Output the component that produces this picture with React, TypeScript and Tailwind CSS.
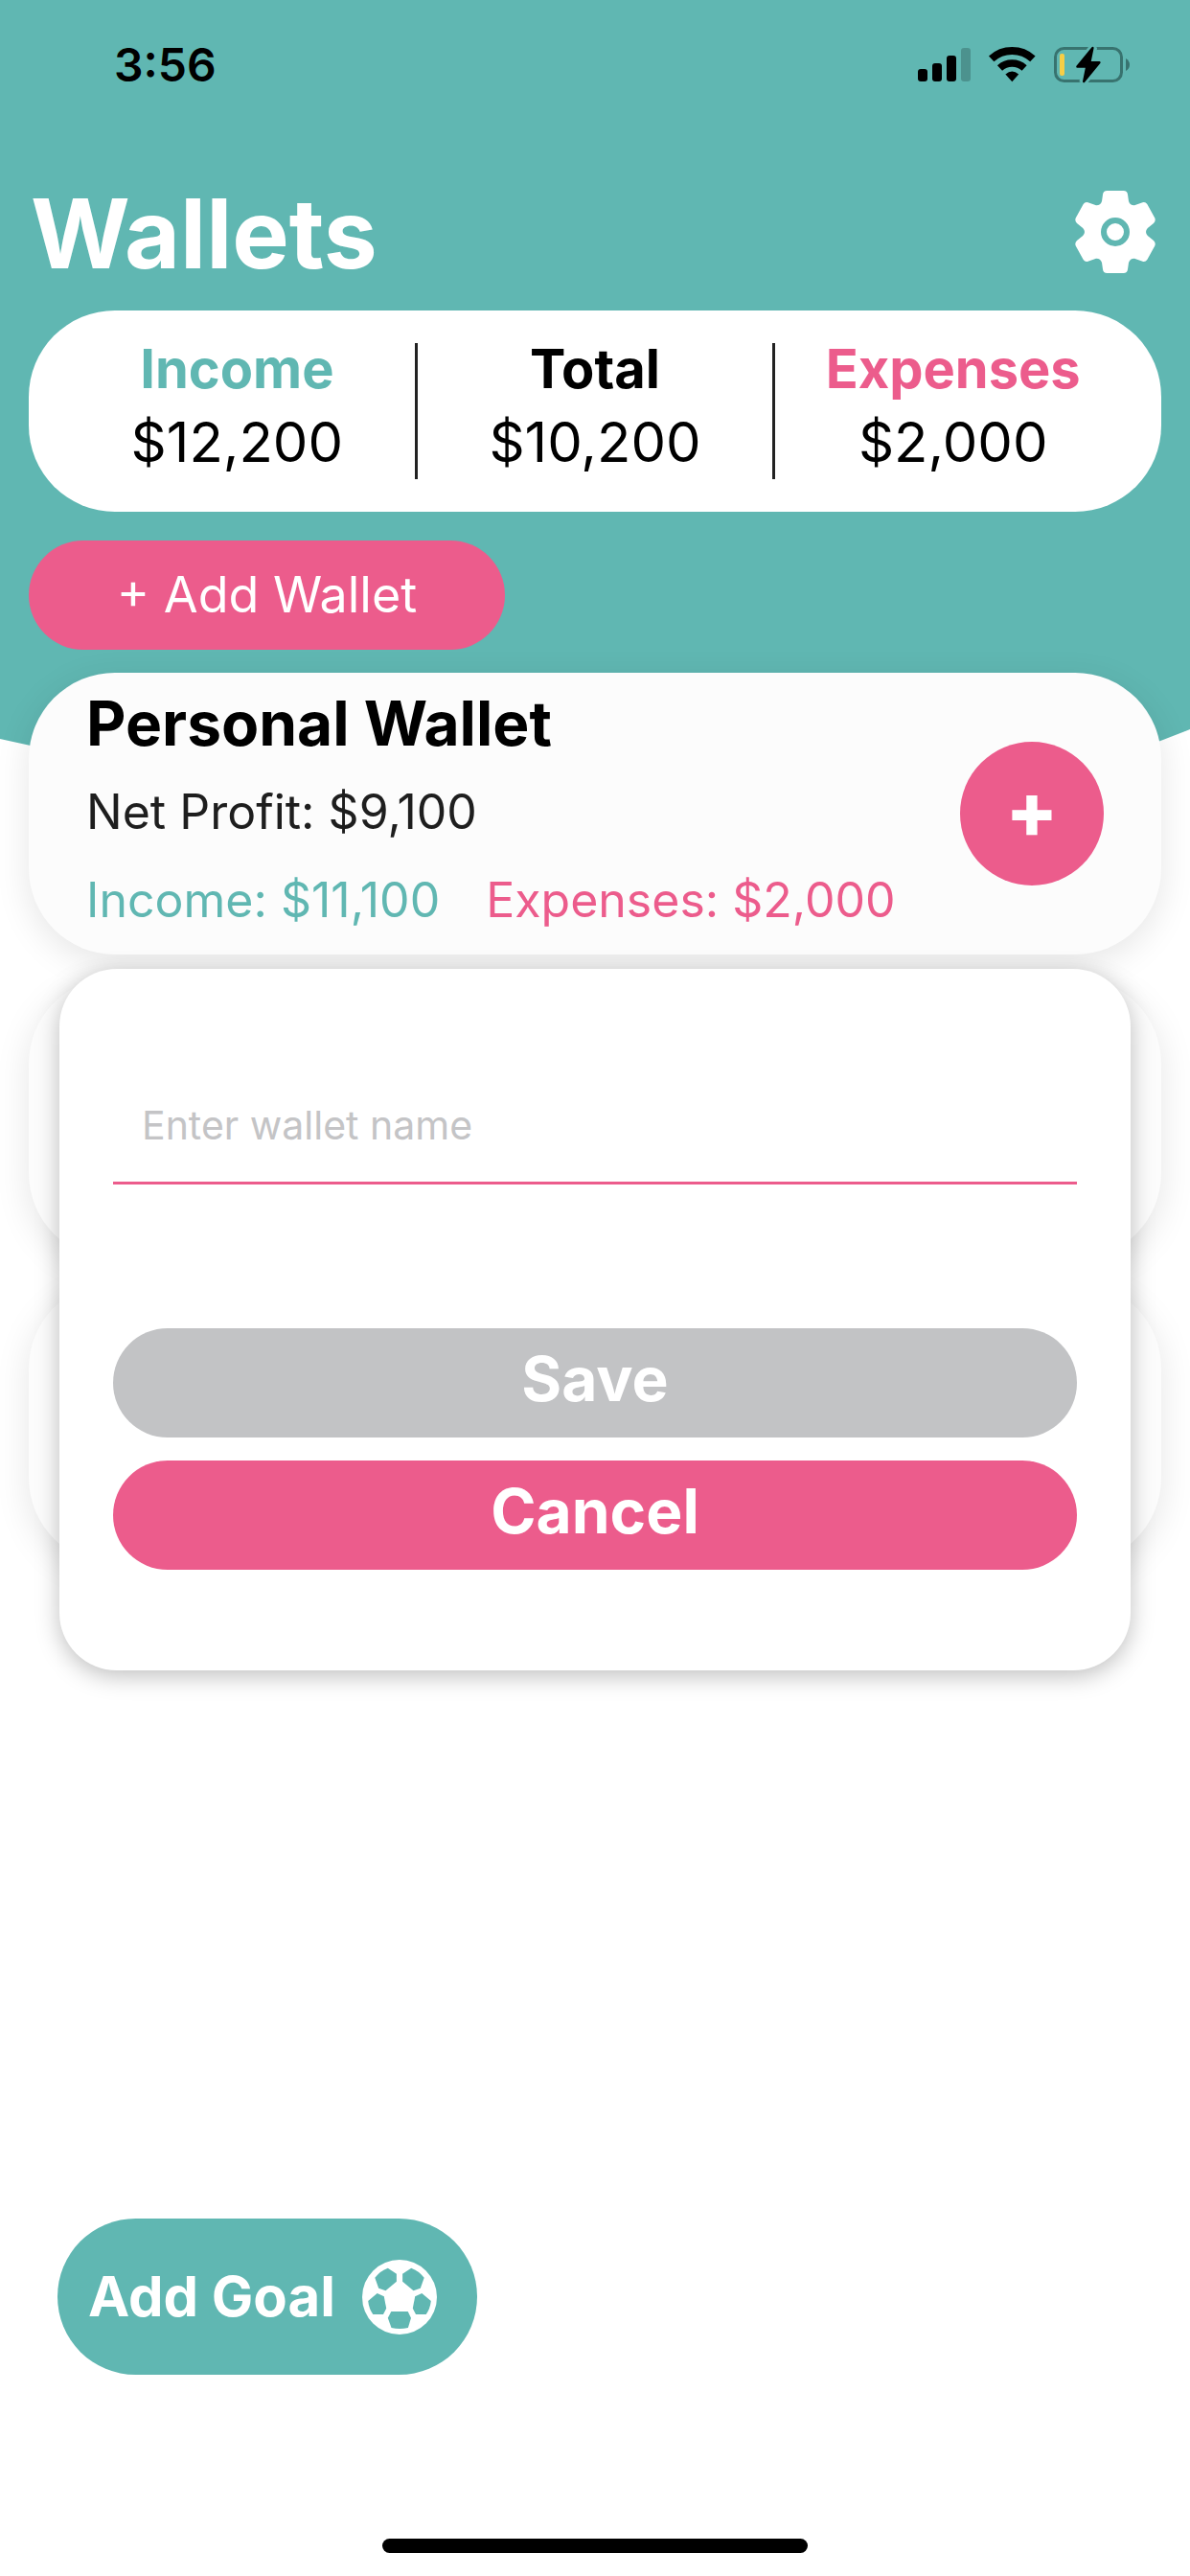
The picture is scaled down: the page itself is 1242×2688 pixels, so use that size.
function StatusIcons() {
  return (
    <svg className="h-10 w-[222px]" viewBox="0 0 222 40" aria-hidden="true">
      <rect x="0" y="24" width="10" height="13" rx="3" />
      <rect x="15" y="18" width="10" height="19" rx="3" />
      <rect x="30" y="10" width="10" height="27" rx="3" />
      <rect x="45" y="2" width="10" height="35" rx="3" opacity="0.2" />
      <path d="M76.7 13.4A32 32 0 0 1 119.9 13.4" fill="none" stroke="#000" strokeWidth="8" />
      <path d="M85.5 23A19 19 0 0 1 111.1 23" fill="none" stroke="#000" strokeWidth="7.6" />
      <path d="M98.3 37.2L91.4 29.6Q98.3 23.6 105.2 29.6Z" />
      <rect x="143.5" y="2.5" width="69" height="34" rx="9" fill="none" stroke="#38736f" strokeWidth="3" />
      <rect x="148" y="8" width="5" height="23" rx="2" fill="#f7ce46" />
      <path d="M217 13Q221 15.5 221 19.5T217 26Z" fill="#38736f" />
      <path
        d="M183.2 1L180.3 16.4H190L172.4 38L175.3 22.4H165.8Z"
        stroke="#60b7b2"
        strokeWidth="8"
        fill="#60b7b2"
      />
      <path
        d="M182.4 2L179.3 17.2H189.4L173.2 37L176.3 21.6H166.4Z"
        stroke="#000"
        strokeWidth="2.4"
        strokeLinejoin="round"
      />
    </svg>
  );
}

function Gear() {
  return (
    <svg className="h-[86px] w-[84px]" viewBox="0 0 84 86" aria-hidden="true">
      <path
        fill="#fff"
        d="M29 4Q29.4 0 33.5 0H50.5Q54.6 0 55 4L56 11Q57.5 15.5 62 15.3L70.5 12.3Q73.5 11.5 75.3 14L83.3 28.5Q84.5 31.5 82 34L75.8 39Q74 41 74 43Q74 45 75.8 47L82 52Q84.5 54.5 83.3 57.5L75.3 72Q73.5 74.5 70.5 73.7L62 70.7Q57.5 70.5 56 75L55 82Q54.6 86 50.5 86H33.5Q29.4 86 29 82L28 75Q26.5 70.5 22 70.7L13.5 73.7Q10.5 74.5 8.7 72L0.7 57.5Q-0.5 54.5 2 52L8.2 47Q10 45 10 43Q10 41 8.2 39L2 34Q-0.5 31.5 0.7 28.5L8.7 14Q10.5 11.5 13.5 12.3L22 15.3Q26.5 15.5 28 11Z"
      />
      <circle cx="42" cy="43" r="12" fill="none" stroke="#60b7b2" strokeWidth="6" />
    </svg>
  );
}

function SoccerBall() {
  return (
    <svg className="size-[78px]" viewBox="0 0 78 78" aria-hidden="true">
      <circle cx="39" cy="39" r="39" fill="#fff" />
      <g fill="#60b7b2">
        <path d="M26.8 8.7L35.9 14.7V22.7L24.5 32.3L17.2 29.7L13.3 18.7Q19 11.5 26.8 8.7Z" />
        <path d="M51.2 8.7L42.1 14.7V22.7L53.5 32.3L60.8 29.7L64.7 18.7Q59 11.5 51.2 8.7Z" />
        <path d="M15.7 35L22.8 38.3L25.2 50.7L22 57H11.3Q7 51 6.2 43Z" />
        <path d="M62.3 35L55.2 38.3L52.8 50.7L56 57H66.7Q71 51 71.8 43Z" />
        <path d="M30.3 54H47.7L51 60.7L47.9 71Q39 73 30.5 71L26.8 60.7Z" />
      </g>
    </svg>
  );
}

const summary = [
  { label: "Income", amount: "$12,200", color: "text-[#60b7b2]" },
  { label: "Total", amount: "$10,200", color: "text-black" },
  { label: "Expenses", amount: "$2,000", color: "text-[#ec5c8c]" },
];

const cardStyle =
  "flex h-[294px] items-center justify-between rounded-[90px] bg-[#fcfcfc] px-[60px] shadow-[0_9px_36px_rgba(0,0,0,0.1)]";

export default function App() {
  return (
    <div className="relative flex min-h-screen flex-col bg-white font-['Inter',sans-serif] text-black">
      <svg
        className="absolute inset-x-0 top-0 h-[860px] w-full"
        viewBox="0 0 1242 860"
        preserveAspectRatio="none"
        aria-hidden="true"
      >
        <path d="M0 0H1242V761Q1000 860 640 860Q300 840 0 771Z" fill="#60b7b2" />
      </svg>

      <div className="relative flex h-[136px] items-center justify-between pr-[62px] pl-[119px]">
        <span className="text-[48px] leading-none font-semibold">3:56</span>
        <StatusIcons />
      </div>

      <header className="relative flex h-[188px] items-center justify-between pr-9 pl-8">
        <h1 className="pt-7 text-[100px] leading-none font-bold text-white">Wallets</h1>
        <button type="button" aria-label="Settings" className="pt-6">
          <Gear />
        </button>
      </header>

      <main className="relative flex flex-col px-[30px]">
        <section className="flex h-[210px] items-center rounded-[90px] bg-white px-8">
          {summary.map((item, i) => (
            <div
              key={item.label}
              className={
                i < summary.length - 1
                  ? "flex h-[142px] flex-1 flex-col items-center justify-center gap-1 border-r-3 border-[#222] pb-3"
                  : "flex h-[142px] flex-1 flex-col items-center justify-center gap-1 pb-3"
              }
            >
              <span className={`text-[56px] leading-[72px] font-bold ${item.color}`}>{item.label}</span>
              <span className="text-[58px] leading-[72px]">{item.amount}</span>
            </div>
          ))}
        </section>

        <button
          type="button"
          className="mt-[30px] h-[114px] w-[497px] rounded-full bg-[#ec5c8c] text-[52px] text-white"
        >
          + Add Wallet
        </button>

        <div className="mt-6 flex flex-col gap-6">
          <section className={cardStyle}>
            <div className="flex flex-col gap-6 pb-1">
              <h2 className="text-[64px] leading-[68px] font-bold">Personal Wallet</h2>
              <p className="text-[50px] leading-[68px] text-[#1e1e1e]">Net Profit: $9,100</p>
              <p className="flex gap-12 text-[50px] leading-[68px]">
                <span className="text-[#60b7b2]">Income: $11,100</span>
                <span className="text-[#ec5c8c]">Expenses: $2,000</span>
              </p>
            </div>
            <button
              type="button"
              aria-label="Add transaction"
              className="size-[150px] rounded-full bg-[#ec5c8c] pb-2 text-[80px] leading-none font-extrabold text-white"
            >
              +
            </button>
          </section>
          <section className={cardStyle} />
          <section className={cardStyle} />
        </div>
      </main>

      <form
        role="dialog"
        aria-label="Add wallet"
        className="absolute inset-x-[62px] top-[1011px] flex flex-col rounded-[60px] bg-white px-14 pt-[108px] pb-[105px] shadow-[0_6px_24px_rgba(0,0,0,0.25)]"
      >
        <input
          type="text"
          aria-label="Wallet name"
          placeholder="Enter wallet name"
          className="h-[117px] border-b-3 border-[#ec5c8c] px-[30px] pb-1 text-[41px] outline-none placeholder:text-[#c4c4c6]"
        />
        <button
          type="button"
          className="mt-[150px] h-[114px] rounded-full bg-[#c2c3c5] pb-2 text-[64px] leading-none font-bold text-white"
        >
          Save
        </button>
        <button
          type="button"
          className="mt-6 h-[114px] rounded-full bg-[#ec5c8c] pb-2 text-[64px] leading-none font-bold text-white"
        >
          Cancel
        </button>
      </form>

      <footer className="relative mt-auto flex flex-col px-[60px] pb-6">
        <button
          type="button"
          className="flex h-[163px] w-[438px] items-center justify-between rounded-full bg-[#60b7b2] pr-[42px] pl-8 text-[58px] font-bold text-white"
        >
          Add Goal
          <SoccerBall />
        </button>
        <div className="mt-[171px] h-[15px] w-[444px] self-center rounded-full bg-black" />
      </footer>
    </div>
  );
}
